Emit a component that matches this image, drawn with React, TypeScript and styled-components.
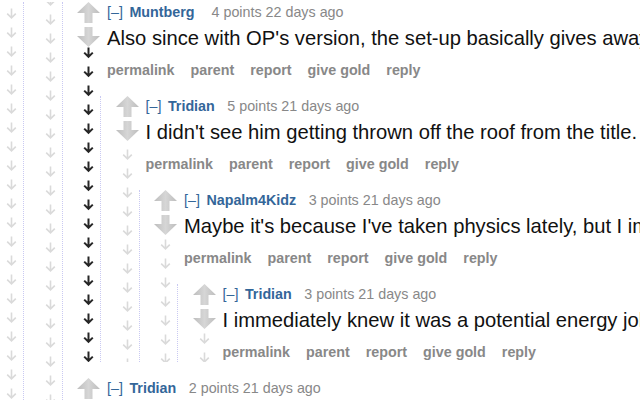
import React, { useId } from "react";
import styled, { createGlobalStyle } from "styled-components";

const Global = createGlobalStyle`
  html, body { margin: 0; padding: 0; background: #fff; overflow: hidden; }
  body { font-family: "Liberation Sans", Arial, sans-serif; }
`;

type Tone = "light" | "dark";

type CommentData = {
  author: string;
  points: number;
  age: string;
  body: string;
  scoreGap?: number;
  tone: Tone;
  phase: number;
  children?: CommentData[];
};

const Page = styled.div`
  width: 655px;
  height: 398px;
  overflow: hidden;
  margin-left: -14.5px;
  padding-top: 2px;
`;

const Comment = styled.div`
  display: flex;
  align-items: stretch;
`;

const Midcol = styled.div`
  width: 37.5px;
  flex: 0 0 37.5px;
  display: flex;
  flex-direction: column;
  align-items: flex-end;
`;

const Column = styled.div`
  flex: 1;
  min-width: 0;
  display: flex;
  flex-direction: column;
`;

const ChildList = styled.div<{ $top: number }>`
  border-left: 1px dotted #c9c9f2;
  margin-top: ${(p) => p.$top}px;
  display: flex;
  flex-direction: column;
  gap: 16px;
`;

const Entry = styled.div`
  padding-left: 7px;
  display: flex;
  flex-direction: column;
`;

const Tagline = styled.div`
  display: flex;
  align-items: baseline;
  font-size: 14.3px;
  line-height: 20px;
  white-space: nowrap;
`;

const Expand = styled.span`
  color: #336699;
  margin-right: 6.5px;
`;

const Author = styled.span`
  color: #336699;
  font-weight: bold;
`;

const Meta = styled.span<{ $gap: number }>`
  color: #888;
  margin-left: ${(p) => p.$gap}px;
`;

const Body = styled.div`
  margin-top: 2px;
  font-size: 20.2px;
  line-height: 28px;
  color: #111;
  white-space: nowrap;
`;

const Actions = styled.ul`
  list-style: none;
  margin: 8px 0 0;
  padding: 0;
  display: flex;
  gap: 16px;
  font-size: 14.3px;
  line-height: 20px;
  font-weight: bold;
  color: #888;
  white-space: nowrap;
`;

const Action = styled.li``;

const VoteSvg = styled.svg<{ $top: number }>`
  display: block;
  flex: 0 0 auto;
  margin-top: ${(p) => p.$top}px;
`;

const TrailSvg = styled.svg`
  display: block;
  flex: 1 1 0;
  height: 0;
  min-height: 0;
  width: 23px;
`;

const VoteArrow: React.FC<{ dir: "up" | "down" }> = ({ dir }) => {
  const id = useId().replace(/:/g, "");
  const d =
    dir === "up"
      ? "M11.5 0 L23 11 L15.5 11 L15.5 21 L7.5 21 L7.5 11 L0 11 Z"
      : "M7.5 0 L15.5 0 L15.5 9 L23 9 L11.5 20 L0 9 L7.5 9 Z";
  return (
    <VoteSvg
      $top={dir === "up" ? 0 : 4}
      width="23"
      height={dir === "up" ? 21 : 20}
      viewBox={dir === "up" ? "0 0 23 21" : "0 0 23 20"}
    >
      <defs>
        <linearGradient id={id} x1="0" x2="1" y1="0" y2="0">
          <stop offset="0" stopColor="#bdbdbd" />
          <stop offset="0.5" stopColor="#d6d6d6" />
          <stop offset="1" stopColor="#bdbdbd" />
        </linearGradient>
      </defs>
      <path d={d} fill={`url(#${id})`} />
    </VoteSvg>
  );
};

const Trail: React.FC<{ tone: Tone; phase: number }> = ({ tone, phase }) => {
  const id = useId().replace(/:/g, "");
  const color = tone === "dark" ? "#262626" : "#dadada";
  return (
    <TrailSvg>
      <defs>
        <pattern id={id} width="23" height="19" y={phase} patternUnits="userSpaceOnUse">
          <path
            d="M11.5 0.5 V9.5 M7.2 5.6 L11.5 9.8 L15.8 5.6"
            stroke={color}
            strokeWidth={tone === "dark" ? 2 : 1.6}
            fill="none"
          />
        </pattern>
      </defs>
      <rect width="23" height="100%" fill={`url(#${id})`} />
    </TrailSvg>
  );
};

const ACTIONS = ["permalink", "parent", "report", "give gold", "reply"];

const CommentView: React.FC<{ c: CommentData }> = ({ c }) => (
  <Comment>
    <Midcol>
      <VoteArrow dir="up" />
      <VoteArrow dir="down" />
      <Trail tone={c.tone} phase={c.phase} />
    </Midcol>
    <Column>
      <Entry>
        <Tagline>
          <Expand>[–]</Expand>
          <Author>{c.author}</Author>
          <Meta $gap={c.scoreGap ?? 12.5}>
            {c.points} points {c.age}
          </Meta>
        </Tagline>
        <Body>{c.body}</Body>
        <Actions>
          {ACTIONS.map((a) => (
            <Action key={a}>{a}</Action>
          ))}
        </Actions>
      </Entry>
      {c.children && c.children.length > 0 && (
        <ChildList $top={16}>
          {c.children.map((ch, i) => (
            <CommentView key={i} c={ch} />
          ))}
        </ChildList>
      )}
    </Column>
  </Comment>
);

const Ancestor: React.FC<{ phase: number; children: React.ReactNode }> = ({
  phase,
  children,
}) => (
  <Comment>
    <Midcol>
      <Trail tone="light" phase={phase} />
    </Midcol>
    <Column>
      <ChildList $top={0}>{children}</ChildList>
    </Column>
  </Comment>
);

const thread: CommentData[] = [
  {
    author: "Muntberg",
    points: 4,
    age: "22 days ago",
    body: "Also since with OP's version, the set-up basically gives away the punchline.",
    scoreGap: 17,
    tone: "dark",
    phase: 0,
    children: [
      {
        author: "Tridian",
        points: 5,
        age: "21 days ago",
        body: "I didn't see him getting thrown off the roof from the title.",
        tone: "light",
        phase: 8,
        children: [
          {
            author: "Napalm4Kidz",
            points: 3,
            age: "21 days ago",
            body: "Maybe it's because I've taken physics lately, but I immediately thought of it.",
            tone: "light",
            phase: 4,
            children: [
              {
                author: "Tridian",
                points: 3,
                age: "21 days ago",
                body: "I immediately knew it was a potential energy joke.",
                tone: "light",
                phase: 4,
              },
            ],
          },
        ],
      },
    ],
  },
  {
    author: "Tridian",
    points: 2,
    age: "21 days ago",
    body: "Exactly.",
    tone: "dark",
    phase: 0,
  },
];

export default function App() {
  return (
    <>
      <Global />
      <Page>
        <Ancestor phase={6}>
          <Ancestor phase={12}>
            {thread.map((c, i) => (
              <CommentView key={i} c={c} />
            ))}
          </Ancestor>
        </Ancestor>
      </Page>
    </>
  );
}
